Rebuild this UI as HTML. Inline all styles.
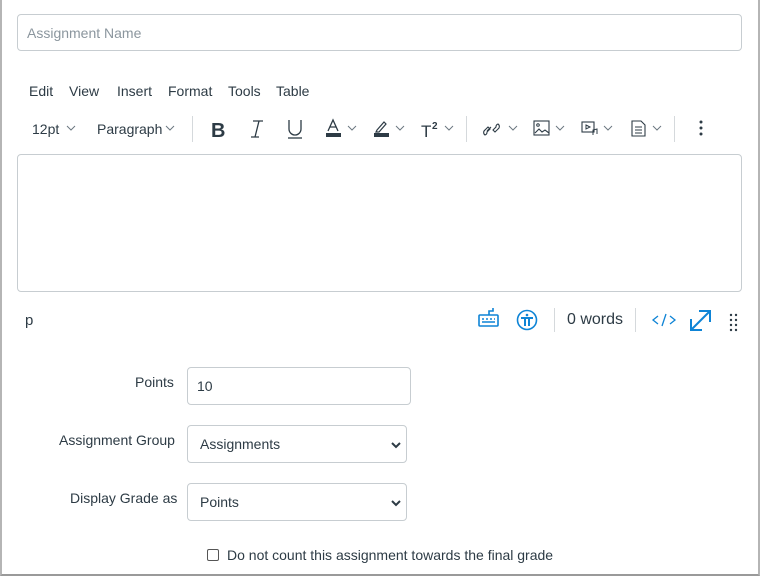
<!DOCTYPE html>
<html><head><meta charset="utf-8"><style>
*{box-sizing:border-box;margin:0;padding:0}
body{width:761px;height:578px;background:#fff;font-family:"Liberation Sans",sans-serif;color:#2d3b45;position:relative;overflow:hidden}
.frame{position:absolute;left:0;top:-2px;width:760px;height:578px;border:2px solid #b5b5b5;border-top:none;border-bottom-color:#9a9a9a}
.abs{position:absolute}
.inp{position:absolute;border:1px solid #c7cdd1;border-radius:4px;background:#fff}
.t{position:absolute;font-size:14px;white-space:nowrap}
.sep{position:absolute;width:1px;background:#d5d9dc}
.chev{position:absolute}
</style></head><body>
<div class="frame"></div>
<div class="inp" style="left:17px;top:14px;width:725px;height:37px"></div>
<div class="t" style="left:27px;top:25px;color:#8b969e;font-size:14px">Assignment Name</div>

<div class="t" style="left:29px;top:83px">Edit</div>
<div class="t" style="left:69px;top:83px">View</div>
<div class="t" style="left:117px;top:83px">Insert</div>
<div class="t" style="left:168px;top:83px">Format</div>
<div class="t" style="left:228px;top:83px">Tools</div>
<div class="t" style="left:276px;top:83px">Table</div>

<div class="t" style="left:32px;top:121px">12pt</div>
<div class="t" style="left:97px;top:121px">Paragraph</div>
<svg class="abs" style="left:0;top:0" width="761" height="160" fill="none" stroke="#2d3b45">
<g stroke-width="1" stroke="#6b7780">
<path d="M67 126l4 4 4-4"/><path d="M166 126l4 4 4-4"/><path d="M348 126l4 4 4-4"/><path d="M396 126l4 4 4-4"/><path d="M445 126l4 4 4-4"/><path d="M509 126l4 4 4-4"/><path d="M556 126l4 4 4-4"/><path d="M604 126l4 4 4-4"/><path d="M653 126l4 4 4-4"/>
</g>
<text x="211" y="137" font-family="Liberation Sans" font-size="20" fill="#2d3b45" stroke="none" font-weight="bold">B</text>
<path d="M253 121h10M251 137h8M259 121l-4 16" stroke-width="1.3"/>
<path d="M289 120v9a6 6 0 0012 0v-9" stroke-width="1.3"/><path d="M288 138h14" stroke-width="1.3"/>
<path d="M328 131l5-11 5 11M330 127h6" stroke-width="1.3"/><rect x="326" y="133" width="15" height="4" fill="#2d3b45" stroke="none"/>
<path d="M377 130l7-8 2 2-7 8h-3z" stroke-width="1.2"/><rect x="374" y="133" width="15" height="4" fill="#2d3b45" stroke="none"/>
<text x="421" y="137" font-family="Liberation Sans" font-size="17" fill="#2d3b45" stroke="none">T</text>
<text x="432" y="129" font-family="Liberation Sans" font-size="10" fill="#2d3b45" stroke="none" font-weight="bold">2</text>
<path d="M487 131l4-4M485 135a3 3 0 010-5l3-3 2 2-3 3a3 3 0 01-2 3zM498 124a3 3 0 010 5l-3 3-2-2 3-3a3 3 0 012-3z" stroke-width="1.1"/>
<rect x="534" y="121" width="15" height="14" stroke-width="1.1"/><path d="M535 133l4-4 3 3 3-2 4 3" stroke-width="1.1"/><circle cx="538" cy="125" r="1.3" stroke-width="1"/>
<rect x="582" y="122" width="12" height="10" stroke-width="1.1"/><path d="M586 125l4 2-4 2z" stroke-width="1"/><path d="M593 135v-5l4-1v5" stroke-width="1"/>
<path d="M632 121h9l4 4v11h-13zM635 127h7M635 130h7M635 133h7" stroke-width="1.1"/>
<circle cx="701" cy="122" r="1.5" fill="#2d3b45" stroke="none"/><circle cx="701" cy="128" r="1.5" fill="#2d3b45" stroke="none"/><circle cx="701" cy="134" r="1.5" fill="#2d3b45" stroke="none"/>
</svg>
<div class="sep" style="left:192px;top:116px;height:26px"></div>
<div class="sep" style="left:466px;top:116px;height:26px"></div>
<div class="sep" style="left:674px;top:116px;height:26px"></div>

<div class="inp" style="left:17px;top:154px;width:725px;height:138px"></div>

<div class="t" style="left:25px;top:312px;font-size:15px">p</div>
<svg class="abs" style="left:470px;top:305px" width="291" height="32" fill="none" stroke="#0e84d6" stroke-width="1.6">
<rect x="9" y="10" width="19" height="11" rx="1"/><path d="M12 14h2M16 14h2M20 14h2M24 14h1M12 17h13M19 10V6h4V3"/>
<circle cx="57" cy="15" r="9.5"/><circle cx="57" cy="10" r="1.3" fill="#0e84d6" stroke="none"/><path d="M51 13h12M55 13v8M59 13v8" stroke-width="2"/>
<path d="M188 11l-5 4 5 4M200 11l5 4-5 4M196 9l-4 12" stroke-width="1.3"/>
<path d="M221 25l19-19M229 6h11v11M221 14v11h11" stroke-width="2"/>
<g fill="#2d3b45" stroke="none"><circle cx="261" cy="10" r="1.2"/><circle cx="266" cy="10" r="1.2"/><circle cx="261" cy="15" r="1.2"/><circle cx="266" cy="15" r="1.2"/><circle cx="261" cy="20" r="1.2"/><circle cx="266" cy="20" r="1.2"/><circle cx="261" cy="25" r="1.2"/><circle cx="266" cy="25" r="1.2"/></g>
</svg>
<div class="sep" style="left:554px;top:308px;height:24px"></div>
<div class="t" style="left:567px;top:311px;font-size:16px">0 words</div>
<div class="sep" style="left:635px;top:308px;height:24px"></div>

<div class="t" style="left:135px;top:374px">Points</div>
<div class="inp" style="left:187px;top:367px;width:224px;height:38px"></div>
<div class="t" style="left:197px;top:378px">10</div>

<div class="t" style="left:59px;top:432px">Assignment Group</div>
<div class="inp" style="left:187px;top:425px;width:220px;height:38px"></div>
<div class="t" style="left:200px;top:436px">Assignments</div>
<svg class="abs" style="left:390px;top:440px" width="12" height="10"><path d="M2 3l4 4 4-4" stroke="#2d3b45" stroke-width="2" fill="none"/></svg>

<div class="t" style="left:70px;top:490px">Display Grade as</div>
<div class="inp" style="left:187px;top:483px;width:220px;height:38px"></div>
<div class="t" style="left:200px;top:494px">Points</div>
<svg class="abs" style="left:390px;top:498px" width="12" height="10"><path d="M2 3l4 4 4-4" stroke="#2d3b45" stroke-width="2" fill="none"/></svg>

<div class="abs" style="left:207px;top:549px;width:12px;height:12px;border:1px solid #555;border-radius:2px"></div>
<div class="t" style="left:227px;top:547px">Do not count this assignment towards the final grade</div>
</body></html>
